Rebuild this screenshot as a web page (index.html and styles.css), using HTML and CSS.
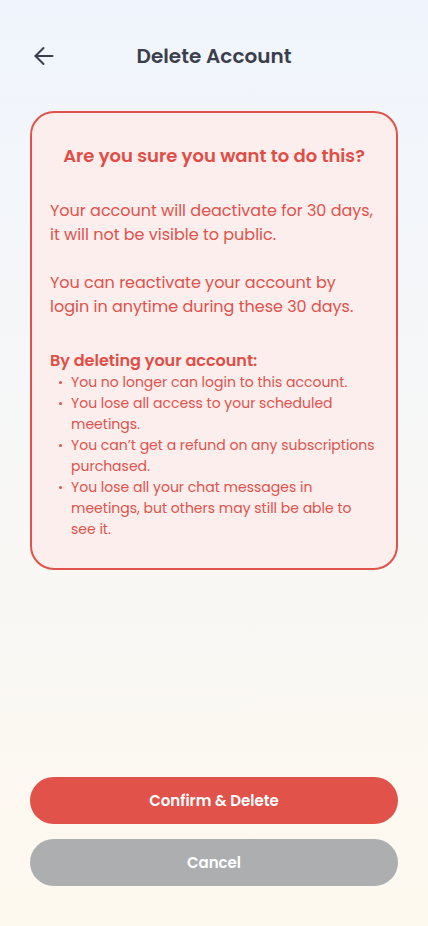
FILE: index.html
```html
<!DOCTYPE html>
<html lang="en">
<head>
<meta charset="utf-8">
<meta name="viewport" content="width=device-width, initial-scale=1">
<title>Delete Account</title>
<link rel="stylesheet" href="styles.css">
</head>
<body>
<div class="page">
  <header class="header">
    <button class="back" aria-label="Back">
      <svg width="20" height="20" viewBox="0 0 20 20" fill="none" stroke="#3b3f4d" stroke-width="2" stroke-linecap="round" stroke-linejoin="round">
        <path d="M18.5 10H1.5"/>
        <path d="M9.5 2L1.5 10L9.5 18"/>
      </svg>
    </button>
    <h1 class="title">Delete Account</h1>
  </header>

  <section class="card">
    <h2 class="card-title">Are you sure you want to do this?</h2>
    <p class="para">Your account will deactivate for 30 days,<br>it will not be visible to public.</p>
    <p class="para">You can reactivate your account by<br>login in anytime during these 30 days.</p>
    <h3 class="list-title">By deleting your account:</h3>
    <ul class="list">
      <li>You no longer can login to this account.</li>
      <li>You lose all access to your scheduled<br>meetings.</li>
      <li>You can’t get a refund on any subscriptions<br>purchased.</li>
      <li>You lose all your chat messages in<br>meetings, but others may still be able to<br>see it.</li>
    </ul>
  </section>

  <div class="spacer"></div>

  <div class="actions">
    <button class="btn btn-danger">Confirm &amp; Delete</button>
    <button class="btn btn-muted">Cancel</button>
  </div>
</div>
</body>
</html>
```
FILE: styles.css
```css
* { box-sizing: border-box; }
html, body { margin: 0; padding: 0; }
body {
  width: 428px;
  height: 926px;
  background: linear-gradient(180deg, #f0f5fd 0%, #fef9ef 100%);
  font-family: "Poppins", "Open Sans", "Noto Sans", sans-serif;
  overflow: hidden;
}
.page {
  height: 926px;
  display: flex;
  flex-direction: column;
  padding: 0 30px 40px;
}
.header {
  position: relative;
  height: 40px;
  margin-top: 36px;
  display: flex;
  align-items: center;
  justify-content: center;
}
.back {
  position: absolute;
  left: 4px;
  top: 10px;
  width: 20px;
  height: 20px;
  padding: 0;
  border: 0;
  background: none;
  display: flex;
}
.title {
  margin: 0;
  font-size: 20px;
  font-weight: 600;
  color: #3b3f4d;
}
.card {
  margin-top: 35px;
  border: 2px solid #e0524a;
  border-radius: 24px;
  background: #fdeeee;
  padding: 31px 18px 28px;
  color: #e0524a;
}
.card-title {
  margin: 0 0 31px;
  text-align: center;
  font-size: 18px;
  line-height: 24px;
  font-weight: 600;
  color: #df4d45;
}
.para {
  margin: 0 0 24px;
  font-size: 16px;
  line-height: 24px;
}
.para + .para { margin-bottom: 0; }
.list-title {
  margin: 31px 0 0;
  font-size: 16px;
  line-height: 22px;
  font-weight: 600;
  color: #df4d45;
}
.list {
  margin: 0;
  padding: 0 0 0 21px;
  font-size: 14px;
  line-height: 21px;
  list-style: none;
}
.list li {
  position: relative;
}
.list li::before {
  content: "";
  position: absolute;
  left: -12px;
  top: 9px;
  width: 3px;
  height: 3px;
  border-radius: 50%;
  background: #e0524a;
}
.spacer { flex: 1; }
.actions {
  display: flex;
  flex-direction: column;
  gap: 15px;
}
.btn {
  height: 47px;
  border: 0;
  border-radius: 24px;
  color: #fff;
  font-family: inherit;
  font-size: 15px;
  font-weight: 600;
}
.btn-danger { background: #e0524a; }
.btn-muted { background: #adaeb0; }
```
